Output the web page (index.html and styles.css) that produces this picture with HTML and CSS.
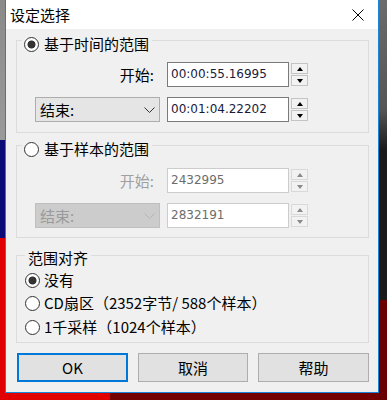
FILE: index.html
```html
<!DOCTYPE html>
<html lang="zh-CN">
<head>
    <meta charset="UTF-8" />
    <title>设定选择</title>
    <link rel="stylesheet" href="styles.css">
</head>
<body>

    <div class="ventana">
        <div class="barra-titulo">
            <span class="titulo">设定选择</span>
            <span class="cerrar">
                <svg width="12" height="12" viewBox="0 0 12 12">
                    <path d="M0.5 0.5 L11.5 11.5 M11.5 0.5 L0.5 11.5" stroke="#000" stroke-width="1" fill="none" />
                </svg>
            </span>
        </div>

        <div class="contenido">
            <div class="grupo grupo-tiempo">
                <div class="leyenda"><span class="radio marcado"></span>基于时间的范围</div>
                <div class="fila">
                    <div class="etiqueta">开始:</div>
                    <div class="campo">00:00:55.16995</div>
                    <div class="giro"><span class="arriba"></span><span class="abajo"></span></div>
                </div>
                <div class="fila">
                    <div class="combo">结束:
                        <svg width="11" height="6" viewBox="0 0 11 6"><path d="M0.5 0.5 L5.5 5.5 L10.5 0.5" stroke="#333" fill="none" /></svg>
                    </div>
                    <div class="campo">00:01:04.22202</div>
                    <div class="giro"><span class="arriba"></span><span class="abajo"></span></div>
                </div>
            </div>

            <div class="grupo grupo-muestras">
                <div class="leyenda"><span class="radio"></span>基于样本的范围</div>
                <div class="fila apagada">
                    <div class="etiqueta">开始:</div>
                    <div class="campo">2432995</div>
                    <div class="giro"><span class="arriba"></span><span class="abajo"></span></div>
                </div>
                <div class="fila apagada">
                    <div class="combo">结束:
                        <svg width="11" height="6" viewBox="0 0 11 6"><path d="M0.5 0.5 L5.5 5.5 L10.5 0.5" stroke="#b4b4b4" fill="none" /></svg>
                    </div>
                    <div class="campo">2832191</div>
                    <div class="giro"><span class="arriba"></span><span class="abajo"></span></div>
                </div>
            </div>

            <div class="grupo grupo-alinear">
                <div class="leyenda texto">范围对齐</div>
                <div class="opcion"><span class="radio marcado"></span>没有</div>
                <div class="opcion"><span class="radio"></span>CD扇区（2352字节/ 588个样本）</div>
                <div class="opcion"><span class="radio"></span>1千采样（1024个样本）</div>
            </div>

            <div class="botones">
                <button class="principal">OK</button>
                <button>取消</button>
                <button>帮助</button>
            </div>
        </div>
    </div>

</body>
</html>
```

FILE: styles.css
```css
body {
    margin: 0;
    width: 387px;
    height: 400px;
    overflow: hidden;
    font-family: "Noto Sans CJK SC", "Noto Sans", sans-serif;
    font-size: 15px;
    color: #000;
    background:
        linear-gradient(to bottom, #8a8a8a 0, #9a9a9a 140px, #0b0b78 140px, #0b0b78 238px, #e00000 238px) 0 0 / 5px 100% no-repeat,
        linear-gradient(to bottom, #6c6c6c 0, #555 110px, #1a1a1a 150px, #1a1a1a 300px, #6a0000 300px) 100% 0 / 8px 100% no-repeat,
        linear-gradient(to right, #e00000 0, #e00000 110px, #720000 110px) 0 100% / 100% 7px no-repeat,
        #333;
}

.ventana {
    margin-left: 5px;
    width: 374px;
    height: 393px;
    box-sizing: border-box;
    border: 1px solid #1883d7;
    border-top: none;
    background: #f0f0f0;
}

/* Barra de titulo */
.barra-titulo {
    height: 29px;
    background: #fff;
    display: flex;
    align-items: center;
    justify-content: space-between;
    padding-left: 4px;
}

.titulo {
    line-height: 20px;
}

.cerrar {
    width: 36px;
    height: 29px;
    display: flex;
    align-items: center;
    justify-content: center;
    margin-right: 2px;
}

.contenido {
    padding: 0 9px 10px 10px;
}

/* Grupos */
.grupo {
    border: 1px solid #dcdcdc;
}

.grupo-tiempo {
    margin-top: 11px;
    height: 91px;
}

.grupo-muestras {
    margin-top: 12px;
    height: 91px;
}

.grupo-alinear {
    margin-top: 17px;
    height: 86px;
}

.leyenda {
    display: flex;
    align-items: center;
    width: fit-content;
    height: 20px;
    line-height: 20px;
    margin: -7px 0 0 5px;
    padding: 0 3px 0 2px;
    background: #f0f0f0;
}

.leyenda.texto {
    margin: -8px 0 0 8px;
    padding: 0 3px;
}

.radio {
    width: 15px;
    height: 15px;
    box-sizing: border-box;
    border: 1px solid #333;
    border-radius: 50%;
    background: #fff;
    margin-right: 5px;
    flex: none;
}

.radio.marcado {
    background: radial-gradient(circle, #333 0, #333 3.6px, #fff 4.4px);
}

/* Filas */
.fila {
    display: flex;
    height: 25px;
    margin-top: 10px;
}

.leyenda + .fila {
    margin-top: 8px;
}

.grupo-muestras .leyenda + .fila {
    margin-top: 9px;
}

.etiqueta {
    width: 125px;
    margin-left: 18px;
    box-sizing: border-box;
    padding-right: 6px;
    text-align: right;
    line-height: 25px;
}

.combo {
    width: 125px;
    margin-left: 18px;
    box-sizing: border-box;
    border: 1px solid #adadad;
    background: #e5e5e5;
    display: flex;
    align-items: center;
    justify-content: space-between;
    padding: 0 4px 0 4px;
    line-height: 20px;
}

.campo {
    width: 122px;
    margin-left: 7px;
    box-sizing: border-box;
    border: 1px solid #7a7a7a;
    background: #fff;
    padding-left: 3px;
    font-family: "DejaVu Sans", sans-serif;
    font-size: 12px;
    line-height: 23px;
    color: #1a1a3a;
}

.giro {
    width: 17px;
    margin-left: 2px;
    padding-top: 1px;
    display: flex;
    flex-direction: column;
    gap: 1px;
}

.giro span {
    height: 11px;
    box-sizing: border-box;
    border: 1px solid #c4c4c4;
    background: #f2f2f2;
    display: flex;
    align-items: center;
    justify-content: center;
}

.giro .arriba::after {
    content: "";
    border-left: 3px solid transparent;
    border-right: 3px solid transparent;
    border-bottom: 4px solid #000;
}

.giro .abajo::after {
    content: "";
    border-left: 3px solid transparent;
    border-right: 3px solid transparent;
    border-top: 4px solid #000;
}

/* Desactivado */
.apagada .etiqueta {
    color: #a0a0a0;
}

.apagada .combo {
    background: #cccccc;
    border-color: #bfbfbf;
    color: #9a9a9a;
}

.apagada .campo {
    border-color: #cccccc;
    color: #6d6d6d;
}

.apagada .giro span {
    border-color: #d9d9d9;
}

.apagada .giro .arriba::after {
    border-bottom-color: #8a8a8a;
}

.apagada .giro .abajo::after {
    border-top-color: #8a8a8a;
}

/* Opciones de alineacion */
.opcion {
    display: flex;
    align-items: center;
    height: 20px;
    line-height: 20px;
    margin-top: 3px;
    padding-left: 8px;
}

.leyenda + .opcion {
    margin-top: 2px;
}

.opcion:last-child {
    margin-top: 4px;
}

.opcion .radio {
    margin-right: 4px;
}

/* Botones */
.botones {
    display: grid;
    grid-template-columns: 111px 110px 111px;
    gap: 10px;
    margin: 10px 0 0 1px;
}

button {
    height: 29px;
    font-family: "Noto Sans CJK SC", "Noto Sans", sans-serif;
    font-size: 15px;
    color: #000;
    background: #e1e1e1;
    border: 1px solid #adadad;
    padding: 0;
    line-height: 20px;
}

button.principal {
    border: 2px solid #0078d7;
}
```
